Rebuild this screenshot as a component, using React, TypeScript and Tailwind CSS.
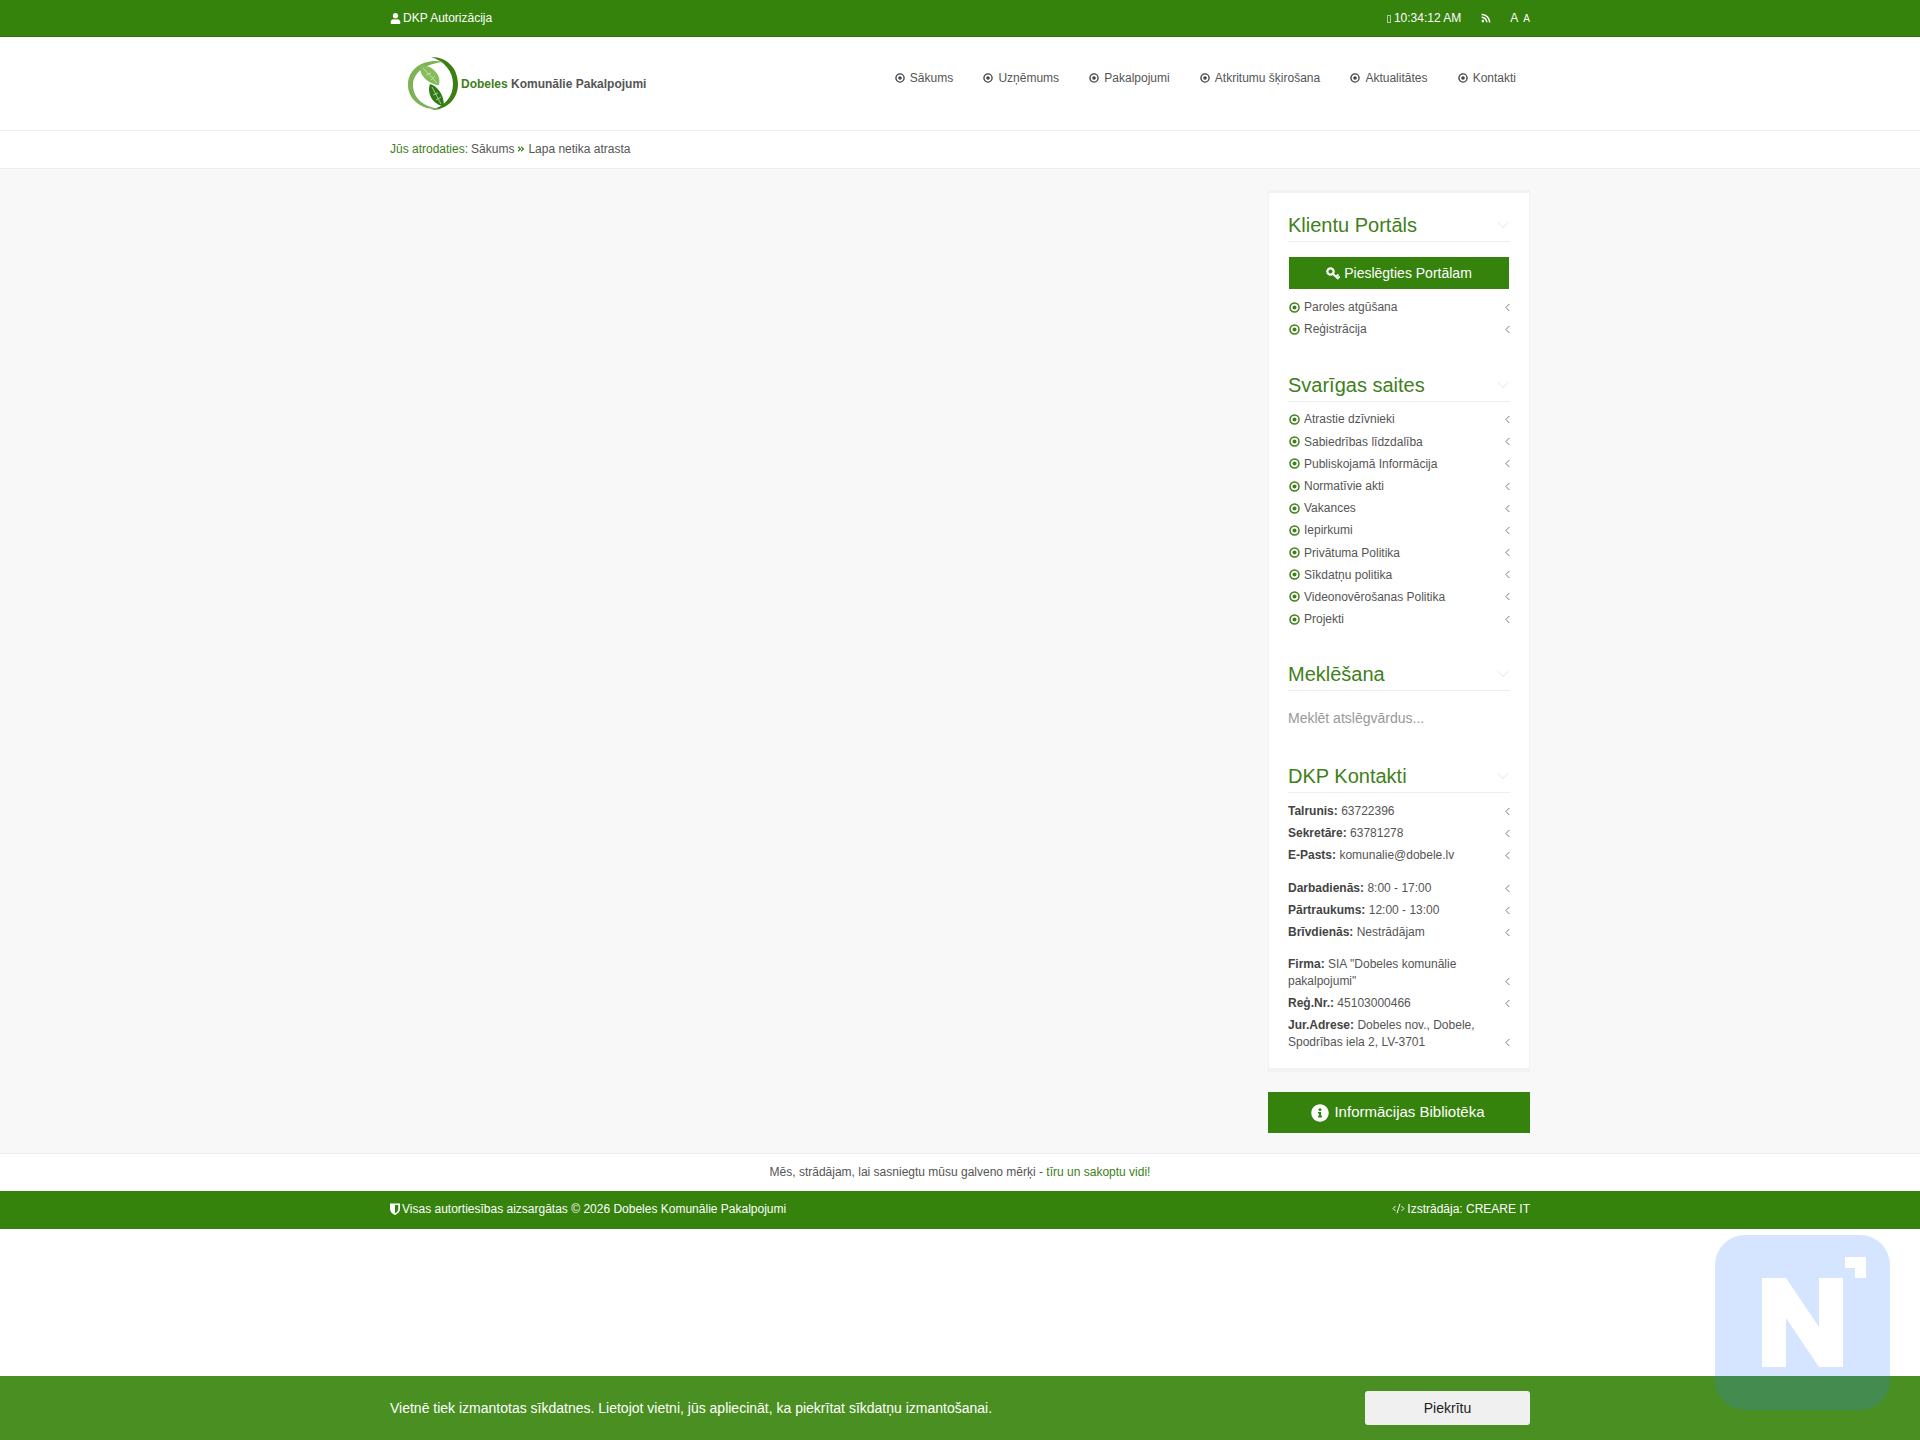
import React from 'react';
import { FaUser, FaRss, FaInfoCircle, FaAngleDoubleRight } from 'react-icons/fa';
import { ChevronLeft, ChevronDown, CodeXml } from 'lucide-react';

const navItems = ['Sākums', 'Uzņēmums', 'Pakalpojumi', 'Atkritumu šķirošana', 'Aktualitātes', 'Kontakti'];
const importantLinks = [
  'Atrastie dzīvnieki',
  'Sabiedrības līdzdalība',
  'Publiskojamā Informācija',
  'Normatīvie akti',
  'Vakances',
  'Iepirkumi',
  'Privātuma Politika',
  'Sīkdatņu politika',
  'Videonovērošanas Politika',
  'Projekti',
];

const Logo = () => (
  <svg width="54" height="54" viewBox="0 0 54 54" className="shrink-0">
    <path d="M25 0 C42 0 52 12 52 27 C52 42 41 53 25 53 C38 50 47 40 47 27 C47 14 38 4 25 0 Z" fill="#3a7f12" />
    <path d="M38 5 C20 1 2 10 2 28 C2 43 16 54 36 52 C19 51 7 42 7 28 C7 15 21 6 38 5 Z" fill="#7db356" />
    <path d="M14 9 C21 7 31 13 33 21 C34 24 33 26 33 28 C25 28 13 20 14 9 Z" fill="#86bd5a" />
    <path d="M24 27 C31 29 38 37 38 49 C29 49 20 38 24 27 Z" fill="#2f7a12" />
    <path d="M17 11 L31 26 M20 18 L25 16 M25 23 L29 19 M26 30 L35 47 M27 38 L32 36 M30 43 L35 40" stroke="#d7e9c6" strokeWidth="0.7" fill="none" />
  </svg>
);

const DotCircle = ({ className, size = 11 }: { className: string; size?: number }) => (
  <svg width={size} height={size} viewBox="0 0 11 11" className={`shrink-0 ${className}`}>
    <circle cx="5.5" cy="5.5" r="4.5" fill="none" stroke="currentColor" strokeWidth="1.5" />
    <circle cx="5.5" cy="5.5" r="2" fill="currentColor" />
  </svg>
);

const Shield = () => (
  <svg width="10" height="12" viewBox="0 0 10 12" className="shrink-0">
    <path d="M0 0.5 H10 V6 C10 9 7.5 10.8 5 12 C2.5 10.8 0 9 0 6 Z M5 2 V10.2 C6.8 9.2 8.3 8 8.3 6 V2 Z" fill="#fff" fillRule="evenodd" />
  </svg>
);

const KeyIcon = () => (
  <svg width="14" height="13" viewBox="0 0 14 13" className="shrink-0">
    <circle cx="4.5" cy="4.5" r="3.2" fill="none" stroke="#fff" strokeWidth="2.2" />
    <path d="M7 7 L12.5 12 M10 9.5 L12.5 7.5 M12 11 L13.8 9.4" fill="none" stroke="#fff" strokeWidth="1.8" />
  </svg>
);

const Heading = ({ title }: { title: string }) => (
  <div className="flex items-center justify-between h-[30px] border-b border-[#eeeeee] pb-1">
    <h3 className="text-[20px] leading-[26px] text-[#40801a]">{title}</h3>
    <ChevronDown size={20} strokeWidth={1.5} className="text-[#f0f0f0] -mr-[3px]" />
  </div>
);

const LinkRow = ({ label }: { label: string }) => (
  <li className="flex items-center justify-between h-[22.2px] pl-[1px] text-[12px] text-[#555555]">
    <span className="flex items-center gap-[4px]">
      <DotCircle className="text-[#40801a]" />
      {label}
    </span>
    <ChevronLeft size={13} strokeWidth={1.6} className="text-[#666666] -mr-[4px]" />
  </li>
);

const ContactRow = ({ name, value }: { name: string; value: string }) => (
  <li className="flex items-end justify-between text-[12px] leading-[17px] py-[2.5px] text-[#555555]">
    <span className="w-[202px]">
      <b className="text-[#444444]">{name}</b> {value}
    </span>
    <ChevronLeft size={13} strokeWidth={1.6} className="text-[#666666] mb-[2px] -mr-[4px] shrink-0" />
  </li>
);

export default function App() {
  return (
    <div className="min-h-screen bg-white text-[12px] text-[#555555] font-['Liberation_Sans',Arial,sans-serif]">
      {/* Top bar */}
      <div className="bg-[#35820d] h-[37px] border-b border-[#2f6f10] text-white">
        <div className="w-[1140px] mx-auto h-full flex items-center justify-between">
          <span className="flex items-center gap-[2px]">
            <FaUser className="text-[11px]" /> DKP Autorizācija
          </span>
          <div className="flex items-center">
            <span className="inline-block w-[4px] h-[8px] border border-white/60 mr-[3px] mt-[1px]"></span>
            <span>10:34:12 AM</span>
            <FaRss className="text-[10px] ml-[20px]" />
            <span className="ml-[19px]">A</span>
            <span className="ml-[5px] text-[10px]">A</span>
          </div>
        </div>
      </div>

      {/* Header */}
      <header className="h-[94px] border-b border-[#eeeeee]">
        <div className="w-[1140px] mx-auto h-full flex items-center justify-between">
          <div className="flex items-center pl-[16px] gap-[1px]">
            <Logo />
            <span className="font-bold text-[12px] text-[#555555]">
              <span className="text-[#40801a]">Dobeles</span> Komunālie Pakalpojumi
            </span>
          </div>
          <nav className="flex items-center gap-[30.2px] pr-[14px] pb-[12px] text-[#555555]">
            {navItems.map((item) => (
              <span key={item} className="flex items-center gap-[5px]">
                <DotCircle size={10} className="text-[#444444]" />
                {item}
              </span>
            ))}
          </nav>
        </div>
      </header>

      {/* Breadcrumb */}
      <div className="h-[38px] border-b border-[#eeeeee]">
        <div className="w-[1140px] mx-auto h-full flex items-center gap-[3px] pb-[1px] text-[#555555]">
          <span className="text-[#40801a]">Jūs atrodaties:</span>
          <span>Sākums</span>
          <FaAngleDoubleRight className="text-[#40801a] text-[8px]" />
          <span>Lapa netika atrasta</span>
        </div>
      </div>

      {/* Content */}
      <main className="bg-[#f8f8f8] h-[985px] border-b border-[#eeeeee] pt-[21px]">
        <div className="w-[1140px] mx-auto flex justify-end">
          <aside className="w-[262px]">
            <div className="bg-white border-x border-[#f2f2f2] border-t-[3px] border-b-[4px] px-[19px] pt-[19px] h-[882px]">
              <Heading title="Klientu Portāls" />
              <button className="mt-[15px] ml-[1px] w-[220px] h-[32px] bg-[#35820d] text-white text-[14px] flex items-center justify-center gap-[4px]">
                <KeyIcon /> Pieslēgties Portālam
              </button>
              <ul className="mt-[7px]">
                {['Paroles atgūšana', 'Reģistrācija'].map((label) => (
                  <LinkRow key={label} label={label} />
                ))}
              </ul>

              <div className="mt-[32px]">
                <Heading title="Svarīgas saites" />
              </div>
              <ul className="mt-[6px]">
                {importantLinks.map((label) => (
                  <LinkRow key={label} label={label} />
                ))}
              </ul>

              <div className="mt-[31px]">
                <Heading title="Meklēšana" />
              </div>
              <input
                readOnly
                placeholder="Meklēt atslēgvārdus..."
                className="mt-[16px] w-full text-[14px] leading-[22px] h-[22px] outline-none placeholder:text-[#999999]"
              />

              <div className="mt-[34px]">
                <Heading title="DKP Kontakti" />
              </div>
              <ul className="mt-[7px]">
                <ContactRow name="Talrunis:" value="63722396" />
                <ContactRow name="Sekretāre:" value="63781278" />
                <ContactRow name="E-Pasts:" value="komunalie@dobele.lv" />
              </ul>
              <ul className="mt-[11px]">
                <ContactRow name="Darbadienās:" value="8:00 - 17:00" />
                <ContactRow name="Pārtraukums:" value="12:00 - 13:00" />
                <ContactRow name="Brīvdienās:" value="Nestrādājam" />
              </ul>
              <ul className="mt-[10px]">
                <ContactRow name="Firma:" value={'SIA "Dobeles komunālie pakalpojumi"'} />
                <ContactRow name="Reģ.Nr.:" value="45103000466" />
                <ContactRow name="Jur.Adrese:" value="Dobeles nov., Dobele, Spodrības iela 2, LV-3701" />
              </ul>
            </div>
            <button className="mt-[20px] w-full h-[41px] pr-[2px] bg-[#35820d] text-white text-[15px] flex items-center justify-center gap-[5px]">
              <FaInfoCircle className="text-[18px]" /> Informācijas Bibliotēka
            </button>
          </aside>
        </div>
      </main>

      {/* Footer */}
      <div className="h-[37px] flex items-center justify-center pb-[1px] text-[#555555]">
        <span>
          Mēs, strādājam, lai sasniegtu mūsu galveno mērķi - <span className="text-[#40801a]">tīru un sakoptu vidi!</span>
        </span>
      </div>
      <footer className="bg-[#35820d] h-[38px] text-white">
        <div className="w-[1140px] mx-auto h-full flex items-center justify-between pb-[3px]">
          <span className="flex items-center gap-[2px]">
            <Shield /> Visas autortiesības aizsargātas © 2026 Dobeles Komunālie Pakalpojumi
          </span>
          <span className="flex items-center gap-[2px]">
            <CodeXml size={13} strokeWidth={1.8} /> Izstrādāja: CREARE IT
          </span>
        </div>
      </footer>

      {/* Cookie bar */}
      <div className="fixed left-0 right-0 bottom-0 h-[64px] bg-[#4a8f22] text-white">
        <div className="w-[1140px] mx-auto h-full flex items-center justify-between">
          <span className="text-[14px]">Vietnē tiek izmantotas sīkdatnes. Lietojot vietni, jūs apliecināt, ka piekrītat sīkdatņu izmantošanai.</span>
          <button className="w-[165px] h-[34px] bg-[#f0f0f0] rounded-[3px] text-[14px] text-[#222222]">Piekrītu</button>
        </div>
      </div>

      {/* Floating widget */}
      <div className="fixed left-[1715px] top-[1235px] w-[175px] h-[175px] rounded-[30px] bg-blue-500/20">
        <svg width="175" height="175" viewBox="0 0 175 175" className="block">
          <path d="M47 43 H71 L104 92 V43 H128 V132 H104 L71 83 V132 H47 Z" fill="#fff" />
          <path d="M130 22 H151 V43 H140 V33 H130 Z" fill="#fff" />
        </svg>
      </div>
    </div>
  );
}
